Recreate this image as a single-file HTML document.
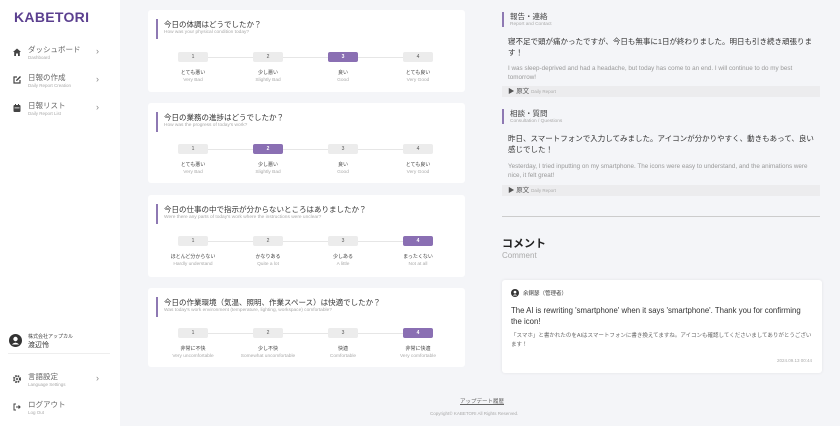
<!DOCTYPE html>
<html><head><meta charset="utf-8"><style>
*{margin:0;padding:0;box-sizing:border-box}
body{width:840px;height:426px;overflow:hidden;background:#f4f5f8;font-family:"Liberation Sans","Noto Sans CJK JP",sans-serif;position:relative;color:#333}
.side{position:absolute;left:0;top:0;width:120px;height:426px;background:#fff}
.logo{position:absolute;left:14px;top:9px;font-size:14px;font-weight:bold;color:#5b3f8f;letter-spacing:.3px}
.nav{position:absolute;left:0;width:120px;height:22px}
.nav .ic{position:absolute;left:12px;top:3px;width:10px;height:10px}
.nav .t{position:absolute;left:28px;top:0;font-size:7.5px;color:#666}
.nav .s{position:absolute;left:28px;top:11px;font-size:4.5px;color:#aaa}
.nav .ch{position:absolute;left:96px;top:2px;font-size:9px;color:#888}
.abs{position:absolute}
.card{position:absolute;left:148px;width:317px;background:#fff;border-radius:3px}
.q{position:absolute;left:8px;top:9px;border-left:2px solid #8e79b3;padding-left:6px;height:20px}
.q .t{font-size:7.5px;color:#333;line-height:11px}
.q .s{font-size:4.8px;color:#aaa}
.line{position:absolute;left:45px;width:240px;height:1px;background:#e6e6e6}
.btn{position:absolute;width:30px;height:10px;background:#ececec;border-radius:2px;font-size:5px;color:#555;text-align:center;line-height:10px}
.btn.on{background:#8a6fb3;color:#fff;font-weight:bold}
.lb{position:absolute;width:60px;text-align:center;font-size:5px;color:#444}
.lb span{display:block;color:#aaa;font-size:4.8px;margin-top:2px}
.rh{position:absolute;left:502px;border-left:2px solid #8e79b3;padding-left:6px}
.rh .t{font-size:7.5px;color:#444;line-height:10px}
.rh .s{font-size:4.8px;color:#aaa}
.jp{position:absolute;left:508px;width:310px;font-size:7.5px;color:#333;line-height:11px}
.en{position:absolute;left:508px;width:300px;font-size:6.3px;color:#999;line-height:9px}
.det{position:absolute;left:502px;width:318px;height:11px;background:#ececee;font-size:6.5px;color:#555;padding-left:6px;line-height:11px}
.det small{font-size:4.5px;color:#aaa}
</style></head><body>
<div class="side">
<div class="logo">KABETORI</div>
<div class="nav" style="top:44px"><svg class="ic" viewBox="0 0 10 10"><path d="M1 5L5 1.5 9 5H7.8V9H6V6.5H4V9H2.2V5Z" fill="#444"/></svg><div class="t">ダッシュボード</div><div class="s">Dashboard</div><div class="ch">›</div></div>
<div class="nav" style="top:72px"><svg class="ic" viewBox="0 0 10 10"><path d="M5 2H2V8H8V5" fill="none" stroke="#444" stroke-width="1.2"/><path d="M4 6L4.3 4.7 8 1 9 2 5.3 5.7Z" fill="#444"/></svg><div class="t">日報の作成</div><div class="s">Daily Report Creation</div><div class="ch">›</div></div>
<div class="nav" style="top:100px"><svg class="ic" viewBox="0 0 10 10"><rect x="1.5" y="2" width="7" height="7" rx="1" fill="#444"/><rect x="3" y="1" width="1" height="2" fill="#444"/><rect x="6" y="1" width="1" height="2" fill="#444"/><rect x="2.5" y="4.5" width="5" height="0.8" fill="#fff"/></svg><div class="t">日報リスト</div><div class="s">Daily Report List</div><div class="ch">›</div></div>
<svg class="abs" style="left:9px;top:334px" width="13" height="13" viewBox="0 0 13 13"><circle cx="6.5" cy="6.5" r="6.5" fill="#333"/><circle cx="6.5" cy="5" r="2.2" fill="#fff"/><path d="M2.8 10.5Q6.5 6.8 10.2 10.5" fill="#fff"/></svg>
<div class="abs" style="left:28px;top:333px;font-size:5px;color:#444">株式会社アップカル</div>
<div class="abs" style="left:28px;top:340px;font-size:7px;color:#333">渡辺怜</div>
<div class="abs" style="left:8px;top:353px;width:102px;height:1px;background:#eee"></div>
<div class="nav" style="top:371px"><svg class="ic" viewBox="0 0 10 10"><circle cx="5" cy="5" r="3" fill="none" stroke="#444" stroke-width="2" stroke-dasharray="1.5 0.9"/><circle cx="5" cy="5" r="1" fill="#444"/></svg><div class="t">言語設定</div><div class="s">Language Settings</div><div class="ch">›</div></div>
<div class="nav" style="top:399px"><svg class="ic" viewBox="0 0 10 10"><path d="M4 2H2V8H4" fill="none" stroke="#444" stroke-width="1"/><path d="M4 5H8M6.5 3.5L8 5 6.5 6.5" fill="none" stroke="#444" stroke-width="1.1"/></svg><div class="t">ログアウト</div><div class="s">Log Out</div></div>
</div>

<div class="card" style="top:10px;height:82px"><div class="q"><div class="t">今日の体調はどうでしたか？</div><div class="s">How was your physical condition today?</div></div>
<div class="line" style="top:47px"></div>
<div class="btn" style="left:30px;top:42px">1</div><div class="btn" style="left:105px;top:42px">2</div><div class="btn on" style="left:180px;top:42px">3</div><div class="btn" style="left:255px;top:42px">4</div>
<div class="lb" style="left:15px;top:59px">とても悪い<span>Very Bad</span></div><div class="lb" style="left:90px;top:59px">少し悪い<span>Slightly Bad</span></div><div class="lb" style="left:165px;top:59px">良い<span>Good</span></div><div class="lb" style="left:240px;top:59px">とても良い<span>Very Good</span></div></div>

<div class="card" style="top:103px;height:80px"><div class="q"><div class="t">今日の業務の進捗はどうでしたか？</div><div class="s">How was the progress of today's work?</div></div>
<div class="line" style="top:46px"></div>
<div class="btn" style="left:30px;top:41px">1</div><div class="btn on" style="left:105px;top:41px">2</div><div class="btn" style="left:180px;top:41px">3</div><div class="btn" style="left:255px;top:41px">4</div>
<div class="lb" style="left:15px;top:58px">とても悪い<span>Very Bad</span></div><div class="lb" style="left:90px;top:58px">少し悪い<span>Slightly Bad</span></div><div class="lb" style="left:165px;top:58px">良い<span>Good</span></div><div class="lb" style="left:240px;top:58px">とても良い<span>Very Good</span></div></div>

<div class="card" style="top:195px;height:82px"><div class="q"><div class="t">今日の仕事の中で指示が分からないところはありましたか？</div><div class="s">Were there any parts of today's work where the instructions were unclear?</div></div>
<div class="line" style="top:46px"></div>
<div class="btn" style="left:30px;top:41px">1</div><div class="btn" style="left:105px;top:41px">2</div><div class="btn" style="left:180px;top:41px">3</div><div class="btn on" style="left:255px;top:41px">4</div>
<div class="lb" style="left:15px;top:58px">ほとんど分からない<span>Hardly understand</span></div><div class="lb" style="left:90px;top:58px">かなりある<span>Quite a lot</span></div><div class="lb" style="left:165px;top:58px">少しある<span>A little</span></div><div class="lb" style="left:240px;top:58px">まったくない<span>Not at all</span></div></div>

<div class="card" style="top:288px;height:79px"><div class="q"><div class="t">今日の作業環境（気温、照明、作業スペース）は快適でしたか？</div><div class="s">Was today's work environment (temperature, lighting, workspace) comfortable?</div></div>
<div class="line" style="top:45px"></div>
<div class="btn" style="left:30px;top:40px">1</div><div class="btn" style="left:105px;top:40px">2</div><div class="btn" style="left:180px;top:40px">3</div><div class="btn on" style="left:255px;top:40px">4</div>
<div class="lb" style="left:15px;top:57px">非常に不快<span>Very uncomfortable</span></div><div class="lb" style="left:90px;top:57px">少し不快<span>Somewhat uncomfortable</span></div><div class="lb" style="left:165px;top:57px">快適<span>Comfortable</span></div><div class="lb" style="left:240px;top:57px">非常に快適<span>Very comfortable</span></div></div>

<div class="rh" style="top:12px"><div class="t">報告・連絡</div><div class="s">Report and Contact</div></div>
<div class="jp" style="top:36px">寝不足で頭が痛かったですが、今日も無事に1日が終わりました。明日も引き続き頑張ります！</div>
<div class="en" style="top:64px;width:295px">I was sleep-deprived and had a headache, but today has come to an end. I will continue to do my best tomorrow!</div>
<div class="det" style="top:86px">▶ 原文 <small>Daily Report</small></div>

<div class="rh" style="top:109px"><div class="t">相談・質問</div><div class="s">Consultation / Questions</div></div>
<div class="jp" style="top:133px">昨日、スマートフォンで入力してみました。アイコンが分かりやすく、動きもあって、良い感じでした！</div>
<div class="en" style="top:162px">Yesterday, I tried inputting on my smartphone. The icons were easy to understand, and the animations were nice, it felt great!</div>
<div class="det" style="top:185px">▶ 原文 <small>Daily Report</small></div>

<div class="abs" style="left:502px;top:216px;width:318px;height:1px;background:#ccc"></div>
<div class="abs" style="left:502px;top:235px;font-size:11px;font-weight:bold;color:#222">コメント</div>
<div class="abs" style="left:502px;top:251px;font-size:8px;color:#aaa">Comment</div>

<div class="abs" style="left:502px;top:280px;width:320px;height:93px;background:#fff;border-radius:3px;box-shadow:0 0 3px rgba(0,0,0,.08)">
<svg class="abs" style="left:9px;top:9px" width="8" height="8" viewBox="0 0 13 13"><circle cx="6.5" cy="6.5" r="6.5" fill="#333"/><circle cx="6.5" cy="5" r="2.2" fill="#fff"/><path d="M2.8 10.5Q6.5 6.8 10.2 10.5" fill="#fff"/></svg>
<div class="abs" style="left:21px;top:9px;font-size:5.5px;color:#444">余銅瑟（管理者）</div>
<div class="abs" style="left:9px;top:25px;width:300px;font-size:7.8px;line-height:11px;color:#333">The AI is rewriting 'smartphone' when it says 'smartphone'. Thank you for confirming the icon!</div>
<div class="abs" style="left:9px;top:52px;width:305px;font-size:5.5px;line-height:9px;color:#666">「スマホ」と書かれたのをAIはスマートフォンに書き換えてますね。アイコンも確認してくださいましてありがとうございます！</div>
<div class="abs" style="right:10px;top:78px;font-size:4.5px;color:#aaa">2024.09.13 00:44</div>
</div>

<div class="abs" style="left:460px;top:397px;font-size:5.5px;color:#666;text-decoration:underline">アップデート履歴</div>
<div class="abs" style="left:430px;top:411px;font-size:4.5px;color:#aaa">Copyright© KABETORI All Rights Reserved.</div>
</body></html>
